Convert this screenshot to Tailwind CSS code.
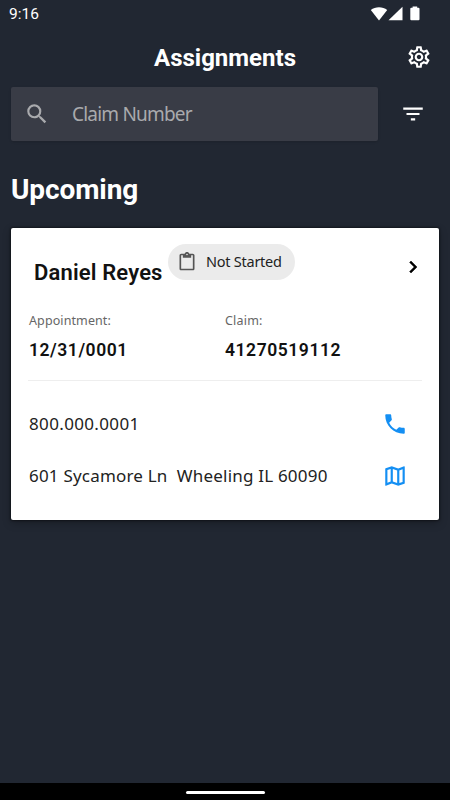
<!DOCTYPE html>
<html lang="en">
<head>
  <meta charset="UTF-8" />
  <meta name="viewport" content="width=device-width, initial-scale=1.0"/>
  <title>Assignments</title>
  <script src="https://cdn.jsdelivr.net/npm/@tailwindcss/browser@4"></script>
</head>
<body class="bg-[#212732] font-['Noto_Sans','Open_Sans',sans-serif]">

  <div class="flex flex-col h-[800px] w-[450px] overflow-hidden whitespace-nowrap">

    <!-- Status Bar -->
    <div class="flex items-center justify-between h-[27px] pl-[9px] pr-[29px] text-white font-[Roboto,sans-serif]">
      <span class="pt-px text-[15.5px] leading-[27px]">9:16</span>
      <svg class="w-[51px] h-[16px]" viewBox="0 0 51 16" fill="white">
        <path d="M.8 4C5.200.4 12.800.4 17.200 4L9 14.500z"/>
        <path d="M32.500 0.800V14.300H18.500z"/>
        <path d="M42.600 1.800V.5h4.600V1.800h1.300a1 1 0 0 1 1 1V13.300a1 1 0 0 1-1 1h-7.200a1 1 0 0 1-1-1V2.800a1 1 0 0 1 1-1z"/>
      </svg>
    </div>

    <!-- Header -->
    <header class="grid grid-cols-[1fr_auto_1fr] items-center h-[60px] px-[18px] text-white">
      <span></span>
      <h1 class="font-[Roboto,sans-serif] font-bold text-[24px] leading-[58px] pt-[2px]">Assignments</h1>
      <svg class="w-[26px] h-[26px] justify-self-end" viewBox="0 0 24 24" fill="currentColor">
        <path d="M19.430 12.980c.04-.32.07-.64.07-.98 0-.34-.03-.66-.07-.98l2.110-1.650c.19-.15.24-.42.12-.64l-2-3.460c-.09-.16-.26-.25-.44-.25-.06 0-.12.01-.17.03l-2.490 1c-.52-.4-1.080-.73-1.690-.98l-.38-2.650C14.460 2.180 14.250 2 14 2h-4c-.25 0-.46.18-.49.42l-.38 2.650c-.61.25-1.170.59-1.690.98l-2.490-1c-.06-.02-.12-.03-.18-.03-.17 0-.34.09-.43.25l-2 3.460c-.13.22-.07.49.12.64l2.110 1.650c-.04.32-.07.65-.07.98 0 .33.03.66.07.98l-2.110 1.650c-.19.15-.24.42-.12.64l2 3.460c.09.16.26.25.44.25.06 0 .12-.01.17-.03l2.490-1c.52.4 1.080.73 1.690.98l.38 2.650c.03.24.24.42.49.42h4c.25 0 .46-.18.49-.42l.38-2.650c.61-.25 1.170-.59 1.690-.98l2.490 1c.06.02.12.03.18.03.17 0 .34-.09.43-.25l2-3.460c.12-.22.07-.49-.12-.64l-2.110-1.650zm-1.980-1.710c.04.31.05.52.05.73 0 .21-.02.43-.05.73l-.14 1.130.89.7 1.080.84-.7 1.210-1.270-.51-1.040-.42-.9.68c-.43.32-.84.56-1.250.73l-1.060.43-.16 1.130-.2 1.350h-1.400l-.19-1.350-.16-1.130-1.060-.43c-.43-.18-.83-.41-1.230-.71l-.91-.7-1.060.43-1.270.51-.7-1.210 1.080-.84.89-.7-.14-1.130c-.03-.31-.05-.54-.05-.74s.02-.43.05-.73l.14-1.130-.89-.7-1.080-.84.7-1.210 1.270.51 1.040.42.9-.68c.43-.32.84-.56 1.250-.73l1.060-.43.16-1.130.2-1.350h1.390l.19 1.350.16 1.130 1.060.43c.43.18.83.41 1.230.71l.91.7 1.060-.43 1.270-.51.7 1.210-1.070.85-.89.7.14 1.130zM12 8c-2.210 0-4 1.790-4 4s1.790 4 4 4 4-1.790 4-4-1.790-4-4-4zm0 6c-1.100 0-2-.9-2-2s.9-2 2-2 2 .9 2 2-.9 2-2 2z"/>
      </svg>
    </header>

    <!-- Search -->
    <div class="flex items-center justify-between pl-[11px] pr-6 h-[54px]">
      <label class="flex items-center gap-[22px] w-[367px] h-[54px] pl-[13px] rounded-xs bg-[#393c46] shadow-sm text-[#a9aaad]">
        <svg class="w-[26px] h-[26px]" viewBox="0 0 24 24" fill="currentColor">
          <path d="M15.500 14h-.79l-.28-.27A6.471 6.471 0 0 0 16 9.500 6.500 6.500 0 1 0 9.500 16c1.610 0 3.090-.59 4.230-1.570l.27.28v.79l5 4.990L20.490 19l-4.990-5zm-6 0C7.010 14 5 11.990 5 9.500S7.010 5 9.500 5 14 7.010 14 9.500 11.990 14 9.500 14z"/>
        </svg>
        <span class="text-[19px] leading-[54px] tracking-[-0.8px]">Claim Number</span>
      </label>
      <svg class="w-[26px] h-[26px]" viewBox="0 0 24 24" fill="white">
        <path d="M10 18h4v-2h-4v2zM3 6v2h18V6H3zm3 7h12v-2H6v2z"/>
      </svg>
    </div>

    <h2 class="mt-[29px] pl-[11px] font-[Roboto,sans-serif] font-bold text-[28px] leading-[40px] text-white tracking-[-0.1px]">Upcoming</h2>

    <!-- Assignment Card -->
    <section class="mt-[18px] mx-[11px] h-[292px] rounded-xs bg-white text-[#111] shadow-[0_0_2px_1px_#0006,0_3px_8px_#0004]">
      <div class="flex items-start h-[80px] pt-4 pl-[23px] pr-[14px]">
        <h3 class="w-[134px] pt-[13px] font-[Roboto,sans-serif] font-semibold text-[22px] leading-[32px] tracking-[0.15px]">Daniel Reyes</h3>
        <span class="flex items-center gap-[9px] w-[127px] h-9 pl-[9px] rounded-full bg-[#ebebeb]">
          <svg class="w-[20px] h-[20px]" viewBox="0 0 24 24" fill="#555">
            <path d="M19 2h-4.180C14.400.84 13.300 0 12 0S9.600.84 9.180 2H5c-1.100 0-2 .9-2 2v16c0 1.100.9 2 2 2h14c1.100 0 2-.9 2-2V4c0-1.100-.9-2-2-2zm-7 0c.55 0 1 .45 1 1s-.45 1-1 1-1-.45-1-1 .45-1 1-1zm7 18H5V4h2v3h10V4h2v16z"/>
          </svg>
          <span class="text-[14.5px] text-[#222] tracking-[-0.25px]">Not Started</span>
        </span>
        <svg class="w-6 h-6 ml-auto mt-[11px]" viewBox="0 0 24 24" fill="black" stroke="black" stroke-width=".5">
          <path d="M8.590 16.590L13.170 12 8.590 7.410 10 6l6 6-6 6z"/>
        </svg>
      </div>

      <div class="grid grid-cols-[196px_1fr] mx-[17px] h-[73px] pl-px border-b border-[#eee]">
        <div>
          <p class="pt-[2px] text-[12.5px] leading-[22px] tracking-[0.1px] text-[#666]">Appointment:</p>
          <p class="mt-[5px] font-[Roboto,sans-serif] font-semibold text-[17.500px] leading-[26px] tracking-[0.55px]">12/31/0001</p>
        </div>
        <div>
          <p class="pt-[2px] text-[12.5px] leading-[22px] tracking-[0.2px] text-[#666]">Claim:</p>
          <p class="mt-[5px] font-[Roboto,sans-serif] font-semibold text-[17.500px] leading-[26px] tracking-[0.55px]">41270519112</p>
        </div>
      </div>

      <div class="flex flex-col pt-[17px] pl-[18px] pr-[31px] text-[17px] text-[#222]">
        <div class="flex items-center justify-between h-[52px]">
          <span class="tracking-[0.35px]">800.000.0001</span>
          <svg class="w-[26px] h-[26px]" viewBox="0 0 24 24" fill="#148ff3">
            <path d="M6.620 10.790c1.440 2.830 3.760 5.140 6.590 6.590l2.200-2.200c.27-.27.67-.36 1.020-.24 1.120.37 2.330.57 3.570.57.55 0 1 .45 1 1V20c0 .55-.45 1-1 1-9.390 0-17-7.610-17-17 0-.55.45-1 1-1h3.500c.55 0 1 .45 1 1 0 1.250.2 2.450.57 3.570.11.35.03.74-.25 1.020l-2.200 2.200z"/>
          </svg>
        </div>
        <div class="flex items-center justify-between h-[52px]">
          <span class="whitespace-pre tracking-[0.2px]">601 Sycamore Ln  Wheeling IL 60090</span>
          <svg class="w-[26px] h-[26px]" viewBox="0 0 24 24" fill="#148ff3">
            <path d="M20.500 3l-.16.03L15 5.100 9 3 3.360 4.900c-.21.07-.36.25-.36.48V20.500c0 .28.22.5.5.5l.16-.03L9 18.900l6 2.100 5.640-1.900c.21-.07.36-.25.36-.48V3.500c0-.28-.22-.5-.5-.5zM10 5.470l4 1.400v11.660l-4-1.400V5.470zm-5 .99l3-1.010v11.700l-3 1.160V6.460zm14 11.080l-3 1.010V6.860l3-1.160v11.840z"/>
          </svg>
        </div>
      </div>
    </section>

    <!-- Navigation Bar -->
    <footer class="mt-auto flex justify-center h-[17px] pt-[8px] bg-black">
      <span class="w-[79px] h-[3px] rounded-full bg-white"></span>
    </footer>
  </div>

</body>
</html>
